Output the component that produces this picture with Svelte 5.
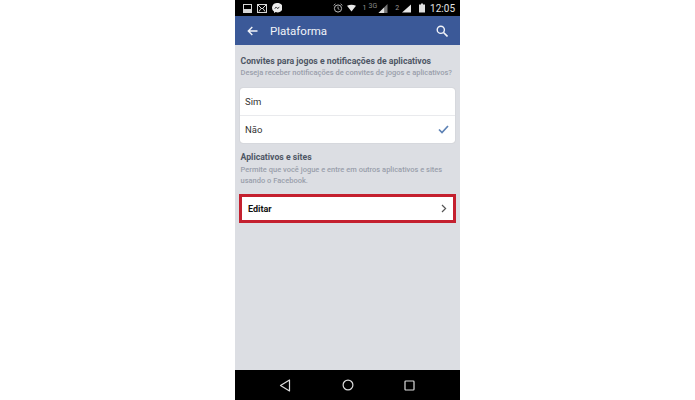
<script>
  const options = [
    { label: 'Sim', checked: false },
    { label: 'Não', checked: true }
  ];
</script>

<div class="page">
  <div class="phone">
    <div class="status">
      <div class="status-left">
        <svg width="9" height="9" viewBox="0 0 9 9"><rect x="0.5" y="0.5" width="8" height="8" fill="none" stroke="#d8d8d8"/><rect x="1" y="5" width="7" height="3" fill="#d8d8d8"/></svg>
        <svg width="10" height="9" viewBox="0 0 10 9"><rect x="0.5" y="0.5" width="9" height="8" fill="none" stroke="#d8d8d8"/><path d="M1 1l4 4 4-4M2 7.5l2-3M8 7.5l-2-3" fill="none" stroke="#d8d8d8"/></svg>
        <svg width="10" height="10" viewBox="0 0 10 10"><path d="M5 0a5 4.7 0 0 0-3 8.4V10l1.7-1A5 4.7 0 1 0 5 0z" fill="#ececec"/><path d="M2 6l2-2.2 1.3 1.2L8 3.6 5.8 6 4.6 4.8z" fill="#111"/></svg>
      </div>
      <div class="status-right">
        <svg class="alarm" width="10" height="10" viewBox="0 0 10 10"><circle cx="5" cy="5.5" r="3.6" fill="none" stroke="#bdbdbd"/><path d="M5 3.5v2.2l1.4.8M0.6 2.4L2.4 0.8M9.4 2.4L7.6 0.8" fill="none" stroke="#bdbdbd" stroke-width="0.9"/></svg>
        <svg class="wifi" width="9" height="8" viewBox="0 0 10 8"><path d="M0 1.5Q5-1 10 1.5L5 8z" fill="#e8e8e8"/></svg>
        <span class="sim">1</span>
        <span class="net">3G</span>
        <svg class="signal" width="10" height="9" viewBox="0 0 8 8"><path d="M8 0v8H0z" fill="#777"/><path d="M5 3v5H0z" fill="#e0e0e0"/></svg>
        <span class="sim two">2</span>
        <svg width="9" height="9" viewBox="0 0 9 8"><path d="M9 0v8H0z" fill="#e8e8e8"/></svg>
        <svg class="battery" width="6" height="10" viewBox="0 0 6 9"><path d="M2 0h2v1h2v8H0V1h2z" fill="#dedede"/></svg>
        <span class="clock">12:05</span>
      </div>
    </div>

    <header class="topbar">
      <svg class="back" width="11" height="10" viewBox="0 0 11 10"><path d="M10.5 5H1.5M5.3 1L1.3 5l4 4" fill="none" stroke="#f2f4f9" stroke-width="1.4"/></svg>
      <span class="title">Plataforma</span>
      <svg class="search" width="12" height="12" viewBox="0 0 12 12"><circle cx="4.8" cy="4.8" r="3.6" fill="none" stroke="#f2f4f9" stroke-width="1.4"/><path d="M7.5 7.5l4 4" stroke="#f2f4f9" stroke-width="1.6"/></svg>
    </header>

    <main class="content">
      <section class="intro">
        <h2>Convites para jogos e notificações de aplicativos</h2>
        <p>Deseja receber notificações de convites de jogos e aplicativos?</p>
      </section>

      <div class="card">
        {#each options as option}
          <div class="row">
            <span>{option.label}</span>
            {#if option.checked}
              <svg width="11" height="9" viewBox="0 0 11 9"><path d="M1 4.5l3 3 6-6.5" fill="none" stroke="#5d82b5" stroke-width="1.7"/></svg>
            {/if}
          </div>
        {/each}
      </div>

      <section class="apps">
        <h2>Aplicativos e sites</h2>
        <p>Permite que você jogue e entre em outros aplicativos e sites usando o Facebook.</p>
      </section>

      <div class="edit">
        <strong>Editar</strong>
        <svg width="6" height="9" viewBox="0 0 6 9"><path d="M1 1l3.6 3.5L1 8" fill="none" stroke="#555" stroke-width="1.2"/></svg>
      </div>
    </main>

    <nav class="softkeys">
      <svg width="12" height="13" viewBox="0 0 12 13"><path d="M10.5 1v11L1.5 6.5z" fill="none" stroke="#dcdcdc" stroke-width="1.2" stroke-linejoin="round"/></svg>
      <svg width="12" height="12" viewBox="0 0 12 12"><circle cx="6" cy="6" r="4.9" fill="none" stroke="#dcdcdc" stroke-width="1.2"/></svg>
      <svg width="11" height="11" viewBox="0 0 11 11"><rect x="1" y="1" width="9" height="9" rx="0.8" fill="none" stroke="#dcdcdc" stroke-width="1.2"/></svg>
    </nav>
  </div>
</div>

<style>
  :global(body) {
    background: #fff;
  }

  .page {
    display: flex;
    justify-content: center;
    height: 400px;
    font-family: Roboto, "Liberation Sans", sans-serif;
  }

  .phone {
    width: 225px;
    display: flex;
    flex-direction: column;
    background: #dcdee3;
  }

  .status {
    height: 16px;
    background: #000;
    display: flex;
    justify-content: space-between;
    align-items: center;
    padding: 0 5px 0 8px;
    color: #ddd;
  }

  .status-left {
    display: flex;
    align-items: center;
    gap: 5px;
  }

  .status-right {
    display: flex;
    align-items: center;
  }

  .wifi {
    margin-left: 4px;
  }

  .sim {
    font-size: 7px;
    color: #999;
    margin-left: 7px;
  }

  .sim.two {
    margin-left: 7px;
    margin-right: 3px;
  }

  .net {
    font-size: 7px;
    color: #888;
    margin: -5px 0 0 2px;
  }

  .signal {
    margin-left: 1px;
  }

  .battery {
    margin-left: 8px;
  }

  .clock {
    font-size: 10px;
    margin-left: 5px;
    color: #e2e2e2;
  }

  .topbar {
    height: 29px;
    background: #3b5998;
    display: flex;
    align-items: center;
    padding: 0 12px;
    color: #f2f4f9;
  }

  .title {
    font-size: 11.5px;
    margin-left: 12px;
  }

  .search {
    margin-left: auto;
  }

  .content {
    flex: 1;
    padding: 11px 5px 0 5px;
  }

  section {
    padding-left: 0.5px;
  }

  h2 {
    margin: 0;
    font-size: 8.7px;
    line-height: 11px;
    font-weight: 700;
    color: #4e5665;
  }

  p {
    margin: 0;
    font-size: 7.5px;
    line-height: 11px;
    font-weight: 500;
    color: #9a9fab;
  }

  .card {
    margin-top: 10px;
    background: #fff;
    border-radius: 3px;
    box-shadow: 0 0 1px rgba(0, 0, 0, 0.25);
  }

  .row {
    height: 27px;
    display: flex;
    align-items: center;
    justify-content: space-between;
    padding: 0 6px 0 5px;
    font-size: 9.5px;
    color: #333;
  }

  .row + .row {
    border-top: 1px solid #e9eaed;
  }

  .apps {
    margin-top: 9px;
  }

  .apps p {
    margin-top: 1px;
  }

  .edit {
    margin: 8px -1px 0 -1px;
    height: 23px;
    background: #fff;
    border: 3px solid #c4202f;
    display: flex;
    align-items: center;
    justify-content: space-between;
    padding: 0 6px;
    font-size: 9px;
    color: #111;
  }

  .softkeys {
    height: 30px;
    background: #000;
    display: flex;
    align-items: center;
    padding: 0 45px 0 44px;
    justify-content: space-between;
  }
</style>
